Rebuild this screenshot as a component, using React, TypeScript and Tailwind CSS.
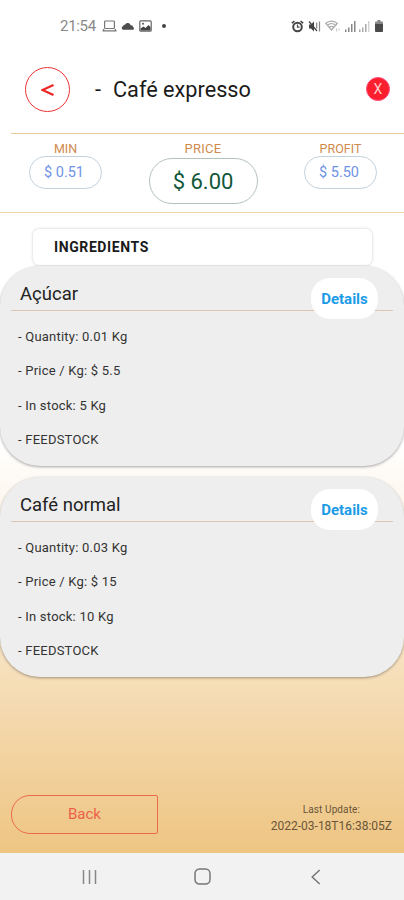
import React from 'react';
import { clsx } from 'clsx';

interface Ingredient {
  name: string;
  quantity: string;
  price: string;
  stock: string;
  type: string;
}

const ingredients: Ingredient[] = [
  { name: 'Açúcar', quantity: '0.01 Kg', price: '$ 5.5', stock: '5 Kg', type: 'FEEDSTOCK' },
  { name: 'Café normal', quantity: '0.03 Kg', price: '$ 15', stock: '10 Kg', type: 'FEEDSTOCK' },
];

function StatusBar() {
  return (
    <div className="flex h-[52px] shrink-0 items-center justify-between pl-[60px] pr-[21px] text-[#555]">
      <div className="flex items-center">
        <span className="w-[42px] text-[15px] leading-5 tracking-[-0.3px] text-[#888]">21:54</span>
        {/* Laptop */}
        <svg width="15" height="12" viewBox="0 0 15 12" fill="none" stroke="#777" strokeWidth="1.2">
          <rect x="2.6" y="1" width="9.8" height="7.5" rx="0.8" />
          <path d="M0.5 10.8h14M2 9l-1 1.6M13 9l1 1.6" />
        </svg>
        {/* Cloud */}
        <svg className="ml-[4px]" width="14" height="10" viewBox="0 0 14 10" fill="#4d4d4d">
          <path d="M2 8.800A2 2 0 0 1 2.200 5 2 2 0 0 1 4.300 3.400 3 3 0 0 1 9.700 4.300 2.400 2.400 0 0 1 12.300 6.300 1.500 1.500 0 0 1 12.300 8.800z" />
        </svg>
        {/* Image */}
        <svg className="ml-[4px]" width="13" height="12" viewBox="0 0 13 12" fill="none">
          <rect x="0.8" y="0.8" width="11.4" height="10.4" rx="1" stroke="#666" strokeWidth="1.2" />
          <path d="M1.500 10.500V8.500l3-2 2 1.500L9.500 5l2 2v3.500z" fill="#444" />
          <circle cx="4" cy="3.800" r="1" fill="#555" />
        </svg>
        <span className="ml-[10px] size-[4px] rounded-full bg-[#444]" />
      </div>
      <div className="flex items-center">
        {/* Alarm */}
        <svg width="13" height="13" viewBox="0 0 13 13" fill="none" stroke="#444">
          <circle cx="6.500" cy="7" r="4.300" strokeWidth="2" />
          <path d="M6.500 4.500V7.200h2" strokeWidth="1.200" />
          <path d="M0.800 3.200l2.700-2M12.200 3.200l-2.700-2" strokeWidth="1.600" />
        </svg>
        {/* Muted speaker with vibration */}
        <svg className="ml-[4px]" width="13" height="13" viewBox="0 0 13 13" fill="none" stroke="#444">
          <path d="M1 4.500h2l3-3v10l-3-3H1z" fill="#444" stroke="none" />
          <path d="M1 1.500l8 9.500" strokeWidth="1.200" />
          <path d="M8.700 2.500v6M11.500 1.500v10" stroke="#888" strokeWidth="1.200" />
        </svg>
        {/* Wi-Fi */}
        <svg className="ml-[4px]" width="15" height="12" viewBox="0 0 15 12" fill="none" stroke="#aaa" strokeWidth="1.200">
          <path d="M0.700 3.500C4 .3 9 .3 12.300 3.500L6.500 10z" />
          <path d="M2.500 5.200c2.300-2 5.700-2 8 0M4.300 7.200c1.300-1.100 3.100-1.100 4.400 0" />
          <path d="M11.500 8.500v3M14 8.500v2" stroke="#ccc" />
        </svg>
        <svg className="ml-[5px]" width="11" height="12" viewBox="0 0 11 12" fill="#888">
          <path d="M0 9.500h1.500V12H0zM3 7.500h1.500V12H3zM6 4h1.500v8H6zM9 1h1.500v11H9z" />
        </svg>
        <svg className="ml-[3px]" width="11" height="12" viewBox="0 0 11 12" fill="#aaa">
          <path d="M0 9.500h1.500V12H0zM3 7.500h1.500V12H3zM6 4h1.500v8H6z" />
          <path d="M9 1h1.500v11H9z" fill="#d4d4d4" />
        </svg>
        {/* Battery */}
        <svg className="ml-[5px]" width="8" height="12" viewBox="0 0 8 12" fill="#4a4a4a">
          <path d="M2.500 0h3v1.500H7a1 1 0 0 1 1 1V4H0V2.500a1 1 0 0 1 1-1h1.500z" fill="#888" />
          <path d="M0 4h8v7a1 1 0 0 1-1 1H1a1 1 0 0 1-1-1z" />
        </svg>
      </div>
    </div>
  );
}

function Stat({ label, value, main }: { label: string; value: string; main?: boolean }) {
  return (
    <div className={clsx('flex flex-col items-center', main ? 'w-[109px]' : 'w-[73px]')}>
      <span
        className={clsx(
          'leading-4 text-[#cf8a4c]',
          main ? 'mb-px text-[13px] tracking-[0.3px]' : 'mb-[-1px] text-[12.500px]'
        )}
      >
        {label}
      </span>
      <div
        className={clsx(
          'flex w-full items-center justify-center rounded-full border',
          main
            ? 'h-[46px] border-[#b4c2bd] text-[22px] text-[#12583a]'
            : 'h-[33px] border-[#c3d1dc] pr-[3px] text-[14.500px] text-[#6f93e6]'
        )}
      >
        {value}
      </div>
    </div>
  );
}

function IngredientCard({ item }: { item: Ingredient }) {
  return (
    <section className="relative h-[200px] rounded-[40px] bg-[#eeeeee] px-[11px] shadow-[0_1px_3px_rgba(0,0,0,0.35)]">
      <h2 className="h-[45px] border-b border-[#dfc4b0] pl-[9px] pt-[14px] text-[18.500px] leading-7 text-[#222]">
        {item.name}
      </h2>
      <button className="absolute right-[26px] top-[12px] h-[41px] w-[67px] rounded-[19px] bg-white pt-px text-[15px] font-bold text-[#1c9be6]">
        Details
      </button>
      <ul className="flex flex-col gap-[14.300px] pl-[7px] pt-[16px] text-[13px] leading-5 tracking-[0.22px] text-[#333]">
        <li>- Quantity: {item.quantity}</li>
        <li>- Price / Kg: {item.price}</li>
        <li>- In stock: {item.stock}</li>
        <li>- {item.type}</li>
      </ul>
    </section>
  );
}

function NavBar() {
  return (
    <nav className="flex h-[47px] shrink-0 items-center bg-[#f2f2f2] pl-[82px]">
      <svg width="16" height="16" viewBox="0 0 16 16" stroke="#888" strokeWidth="1.500">
        <path d="M1.500 1v14M7.500 1v14M13.500 1v14" />
      </svg>
      <svg className="ml-[96px]" width="17" height="17" viewBox="0 0 17 17" fill="none" stroke="#777" strokeWidth="1.500">
        <rect x="1" y="1" width="15" height="15" rx="4.500" />
      </svg>
      <svg className="ml-[100px]" width="10" height="16" viewBox="0 0 10 16" fill="none" stroke="#777" strokeWidth="1.500">
        <path d="M8.700 1L1.200 8l7.500 7" />
      </svg>
    </nav>
  );
}

export default function App() {
  return (
    <div className="flex h-[900px] w-[404px] flex-col overflow-hidden bg-white font-['Roboto',sans-serif]">
      <div className="flex min-h-0 flex-1 flex-col bg-linear-to-b from-white from-52% to-[#eec582]">
        <StatusBar />

        <header className="flex h-[81px] shrink-0 items-center pb-[7px] pl-[25px] pr-[14px]">
          <button className="flex size-[45px] items-center justify-center rounded-full border border-[#ec3434] pl-px pt-px">
            <svg width="14" height="14" viewBox="0 0 14 14" fill="none" stroke="#ee2626" strokeWidth="2.200">
              <path d="M12.500 2L1.500 7l11 5" />
            </svg>
          </button>
          <h1 className="ml-[25px] flex flex-1 pt-[2px] text-[21.700px] leading-8 text-[#1b1b1b]">
            <span className="w-[18px]">-</span>Café expresso
          </h1>
          <button className="size-6 rounded-full border border-[#ff4f80] bg-[#fb1f2e] text-[14px] leading-none text-[#ffc9c9]">
            X
          </button>
        </header>

        <div className="ml-[11px] h-px shrink-0 bg-[#eccb9c]" />
        <div className="flex h-[79px] shrink-0 items-start justify-between border-b border-[#f1d7ae] pl-[29px] pr-[27px] pt-[7px]">
          <Stat label="MIN" value="$ 0.51" />
          <Stat label="PRICE" value="$ 6.00" main />
          <Stat label="PROFIT" value="$ 5.50" />
        </div>

        <div className="ml-[33px] mt-[16px] flex h-[36px] w-[339px] shrink-0 items-center rounded-[6px] bg-white pl-[21px] text-[14px] font-bold tracking-[0.6px] text-[#1a1a1a] shadow-[0_0_3px_rgba(0,0,0,0.22)]">
          INGREDIENTS
        </div>

        <div className="mt-px flex flex-col gap-[11px]">
          {ingredients.map((item) => (
            <IngredientCard key={item.name} item={item} />
          ))}
        </div>

        <footer className="mt-auto flex items-end justify-between pb-[19px] pl-[11px] pr-[12px]">
          <button className="h-[39px] w-[147px] rounded-l-[19px] rounded-r-[2px] border border-[#ea6a4c] text-[15px] text-[#ec6248]">
            Back
          </button>
          <div className="text-center text-[#6b5538]">
            <p className="text-[10px] leading-4 tracking-[0.1px]">Last Update:</p>
            <p className="text-[12px] leading-4">2022-03-18T16:38:05Z</p>
          </div>
        </footer>
      </div>
      <NavBar />
    </div>
  );
}
